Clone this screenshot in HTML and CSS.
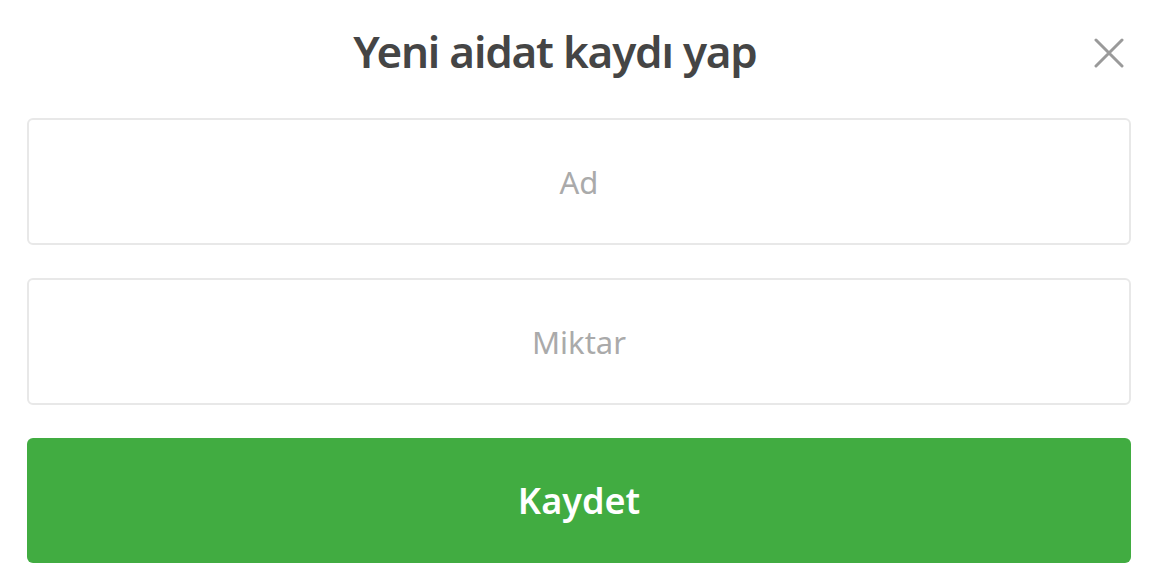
FILE: index.html
```html
<!DOCTYPE html>
<html lang="tr">
<head>
    <meta charset="UTF-8">
    <meta name="viewport" content="width=device-width, initial-scale=1.0">
    <title>Yeni aidat kaydı yap</title>
    <link rel="stylesheet" href="styles.css">
</head>
<body>
    <div class="modal">
        <header class="modal-header">
            <h1>Yeni aidat kaydı yap</h1>
            <button class="close-btn" title="Kapat">
                <svg width="30" height="30" viewBox="0 0 30 30">
                    <path d="M2 2 L28 28 M28 2 L2 28" stroke="#9a9a9a" stroke-width="3" stroke-linecap="round"/>
                </svg>
            </button>
        </header>

        <form class="modal-form">
            <input class="field" type="text" placeholder="Ad">
            <input class="field" type="text" placeholder="Miktar">
            <button class="save-btn" type="button">Kaydet</button>
        </form>
    </div>
</body>
</html>
```

FILE: styles.css
```css
body {
    font-family: "Noto Sans", "Open Sans", sans-serif;
    color: #444;
    background-color: #fff;
    margin: 0;
    padding: 0;
}

.modal {
    padding: 14px 27px 0 27px;
}

.modal-header {
    height: 74px;
    display: flex;
    align-items: center;
    margin-bottom: 30px;
}

.modal-header h1 {
    flex: 1;
    margin: 0;
    text-align: center;
    font-size: 44px;
    font-weight: 600;
    color: #454545;
    letter-spacing: -1.2px;
}

.close-btn {
    width: 48px;
    height: 48px;
    padding: 3px 7px 0 0;
    border: none;
    background: none;
    cursor: pointer;
    display: flex;
    align-items: center;
    justify-content: flex-end;
}

.modal-form {
    display: flex;
    flex-direction: column;
    gap: 33px;
}

.field {
    box-sizing: border-box;
    height: 127px;
    width: 100%;
    border: 2px solid #e8e8e8;
    border-radius: 6px;
    font-family: inherit;
    font-size: 31px;
    text-align: center;
    color: #444;
    outline: none;
}

.field::placeholder {
    color: #aaa;
}

.save-btn {
    height: 125px;
    border: none;
    border-radius: 6px;
    background-color: #41ac41;
    color: #fff;
    font-family: inherit;
    font-size: 36px;
    font-weight: 600;
    cursor: pointer;
}
```
